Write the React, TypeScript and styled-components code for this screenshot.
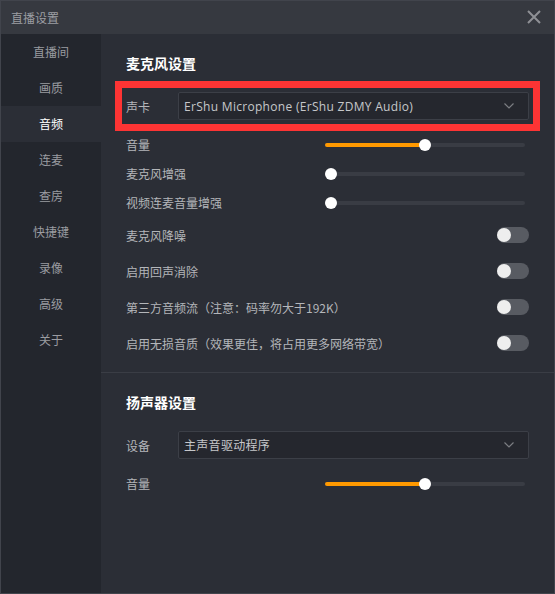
import React from "react";
import styled, { createGlobalStyle } from "styled-components";

const Global = createGlobalStyle`
  html, body { margin: 0; padding: 0; background: #2b2e36; }
  * { box-sizing: border-box; }
  body { font-family: "Microsoft YaHei", "Noto Sans", "Noto Sans CJK SC", sans-serif; }
`;

const Window = styled.div`
  width: 555px;
  height: 594px;
  border: 1px solid #41444c;
  display: flex;
  flex-direction: column;
  background: #2b2e36;
  overflow: hidden;
`;

const TitleBar = styled.div`
  height: 33px;
  flex: 0 0 33px;
  background: #363940;
  display: flex;
  align-items: center;
  justify-content: space-between;
  padding: 0 12px 1px 10px;
`;

const Title = styled.div`
  color: #9c9ea3;
  font-size: 12px;
  font-family: "Noto Sans CJK SC", sans-serif;
`;

const CloseBtn = styled.button`
  width: 16px;
  height: 16px;
  padding: 0;
  border: 0;
  background: transparent;
  display: flex;
  align-items: center;
  justify-content: center;
`;

const Body = styled.div`
  flex: 1;
  display: flex;
  min-height: 0;
`;

const Sidebar = styled.nav`
  width: 100px;
  flex: 0 0 100px;
  background: #23262d;
  display: flex;
  flex-direction: column;
`;

const NavItem = styled.div<{ $active?: boolean }>`
  height: 36px;
  display: flex;
  align-items: center;
  justify-content: center;
  padding-bottom: 1px;
  font-size: 12px;
  font-family: "Noto Sans CJK SC", sans-serif;
  color: ${(p) => (p.$active ? "#ffffff" : "#9a9ca1")};
  background: ${(p) => (p.$active ? "#2b2e36" : "transparent")};
`;

const Content = styled.main`
  flex: 1;
  display: flex;
  flex-direction: column;
`;

const Section = styled.section<{ $divider?: boolean }>`
  padding: 20px 25px 11px 25px;
  border-bottom: ${(p) => (p.$divider ? "1px solid #3a3d45" : "none")};
`;

const Heading = styled.h2`
  margin: 0 0 18px 0;
  height: 20px;
  line-height: 19px;
  font-size: 14px;
  font-weight: bold;
  color: #ffffff;
  font-family: "Noto Sans CJK SC", sans-serif;
`;

const SelectRow = styled.div<{ $highlight?: boolean }>`
  display: flex;
  align-items: center;
  height: 28px;
  margin-bottom: 10px;
  outline: ${(p) => (p.$highlight ? "7px solid #fd3434" : "none")};
  outline-offset: 4px;
`;

const Label = styled.div`
  font-size: 12px;
  color: #b4b6ba;
  font-family: "Noto Sans CJK SC", sans-serif;
  white-space: nowrap;
`;

const SelectLabel = styled(Label)`
  width: 52px;
  flex: 0 0 52px;
`;

const Select = styled.div`
  flex: 1;
  height: 28px;
  border: 1px solid #3c3f47;
  border-radius: 2px;
  background: #25272e;
  display: flex;
  align-items: center;
  justify-content: space-between;
  padding: 0 14px 0 5px;
  color: #c6c7ca;
  font-size: 12px;
  letter-spacing: 0.3px;
  font-family: "Open Sans", "Noto Sans CJK SC", sans-serif;
`;

const SliderRow = styled.div`
  height: 29px;
  display: flex;
  align-items: center;
  justify-content: space-between;
`;

const Track = styled.div<{ $mr: number }>`
  position: relative;
  width: 200px;
  height: 4px;
  border-radius: 2px;
  background: #393c44;
  margin-right: ${(p) => p.$mr}px;
`;

const Fill = styled.div`
  position: absolute;
  left: 0;
  top: 0;
  height: 4px;
  border-radius: 2px;
  background: #ff9900;
`;

const Thumb = styled.div`
  position: absolute;
  top: -4px;
  width: 12px;
  height: 12px;
  margin-left: -6px;
  border-radius: 50%;
  background: #ffffff;
`;

const ToggleRow = styled.div`
  height: 36px;
  display: flex;
  align-items: center;
  justify-content: space-between;
`;

const Toggle = styled.div`
  width: 32px;
  height: 16px;
  border-radius: 8px;
  background: #585b62;
  position: relative;
  flex: 0 0 auto;
`;

const Knob = styled.div`
  position: absolute;
  left: 0;
  top: 1px;
  width: 14px;
  height: 14px;
  border-radius: 50%;
  background: #eeeeee;
`;

const Chevron = () => (
  <svg width="10" height="6" viewBox="0 0 10 6">
    <path d="M0.5 0.5 L5 5 L9.5 0.5" fill="none" stroke="#7c7e83" strokeWidth="1.2" />
  </svg>
);

const Slider = ({ value, mr = 4 }: { value: number; mr?: number }) => {
  const center = 6 + value * (200 - 12);
  return (
    <Track $mr={mr}>
      <Fill style={{ width: value > 0 ? center : 0 }} />
      <Thumb style={{ left: center }} />
    </Track>
  );
};

const navItems = ["直播间", "画质", "音频", "连麦", "查房", "快捷键", "录像", "高级", "关于"];

export default function App() {
  return (
    <>
      <Global />
      <Window>
        <TitleBar>
          <Title>直播设置</Title>
          <CloseBtn aria-label="close">
            <svg width="14" height="14" viewBox="0 0 14 14">
              <path d="M1 1 L13 13 M13 1 L1 13" stroke="#8e9095" strokeWidth="2" />
            </svg>
          </CloseBtn>
        </TitleBar>
        <Body>
          <Sidebar>
            {navItems.map((n) => (
              <NavItem key={n} $active={n === "音频"}>
                {n}
              </NavItem>
            ))}
          </Sidebar>
          <Content>
            <Section $divider>
              <Heading>麦克风设置</Heading>
              <SelectRow $highlight>
                <SelectLabel>声卡</SelectLabel>
                <Select>
                  <span>ErShu Microphone (ErShu ZDMY Audio)</span>
                  <Chevron />
                </Select>
              </SelectRow>
              <SliderRow>
                <Label>音量</Label>
                <Slider value={0.5} />
              </SliderRow>
              <SliderRow>
                <Label>麦克风增强</Label>
                <Slider value={0} />
              </SliderRow>
              <SliderRow>
                <Label>视频连麦音量增强</Label>
                <Slider value={0} />
              </SliderRow>
              <ToggleRow>
                <Label>麦克风降噪</Label>
                <Toggle><Knob /></Toggle>
              </ToggleRow>
              <ToggleRow>
                <Label>启用回声消除</Label>
                <Toggle><Knob /></Toggle>
              </ToggleRow>
              <ToggleRow>
                <Label>第三方音频流（注意：码率勿大于192K）</Label>
                <Toggle><Knob /></Toggle>
              </ToggleRow>
              <ToggleRow>
                <Label>启用无损音质（效果更佳，将占用更多网络带宽）</Label>
                <Toggle><Knob /></Toggle>
              </ToggleRow>
            </Section>
            <Section>
              <Heading>扬声器设置</Heading>
              <SelectRow>
                <SelectLabel>设备</SelectLabel>
                <Select>
                  <span>主声音驱动程序</span>
                  <Chevron />
                </Select>
              </SelectRow>
              <SliderRow>
                <Label>音量</Label>
                <Slider value={0.5} mr={4} />
              </SliderRow>
            </Section>
          </Content>
        </Body>
      </Window>
    </>
  );
}
